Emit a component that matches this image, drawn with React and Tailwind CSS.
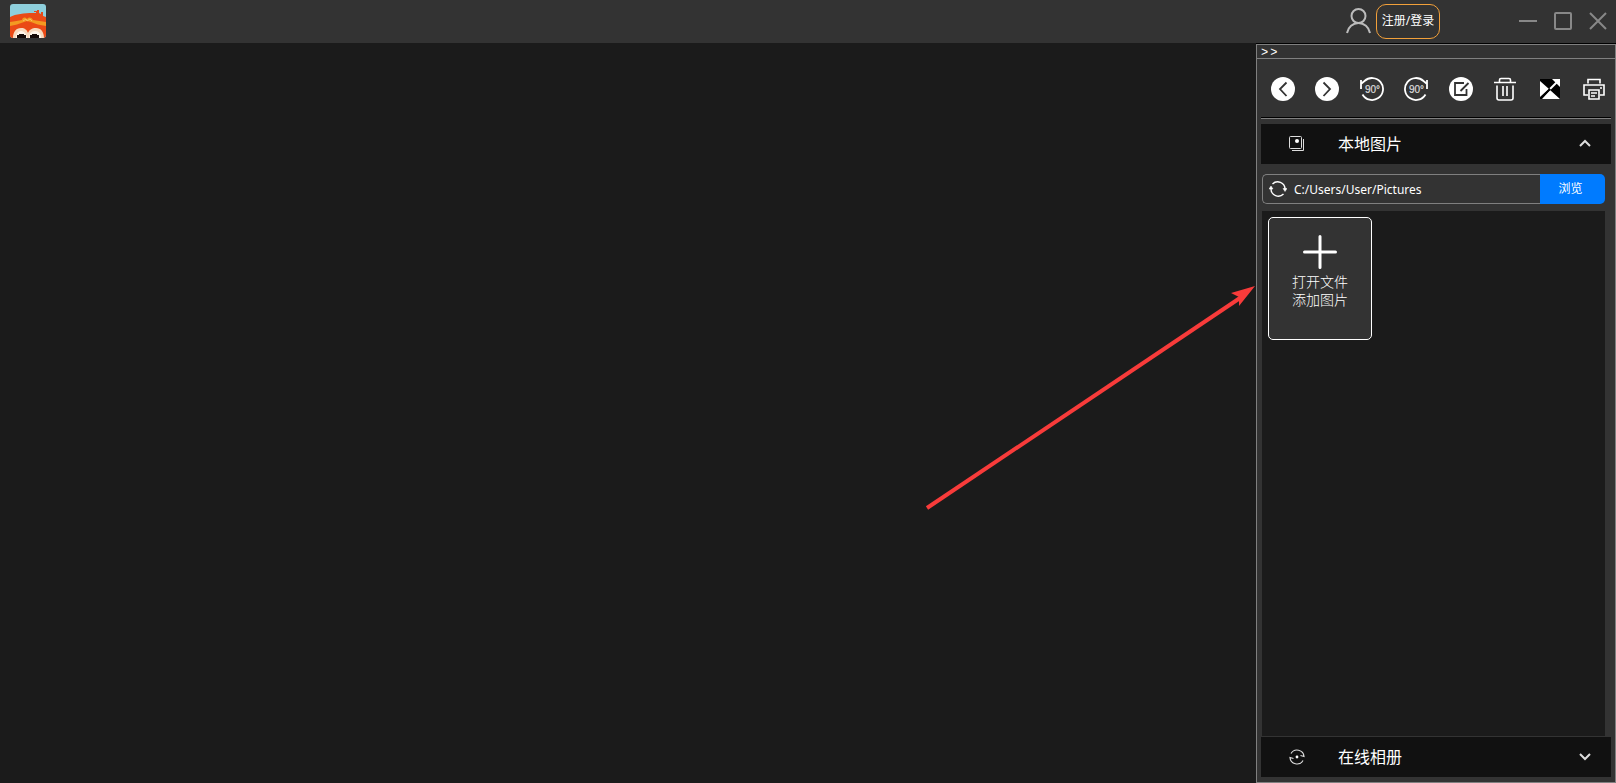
import React from "react";

function Glyph({ children, className = "size-6", viewBox = "0 0 24 24", width = 2 }) {
  return (
    <svg
      className={className}
      viewBox={viewBox}
      fill="none"
      stroke="currentColor"
      strokeWidth={width}
      aria-hidden="true"
    >
      {children}
    </svg>
  );
}

function Logo() {
  return (
    <svg className="h-[34px] w-9" viewBox="0 0 36 34" aria-hidden="true">
      <defs>
        <clipPath id="logo-frame">
          <rect width="36" height="34" rx="3" />
        </clipPath>
      </defs>
      <g clipPath="url(#logo-frame)">
        <rect width="36" height="34" fill="#8ecfdc" />
        <path d="M0 13C6 10 14 9 23 9h3V8h-2V7h3V6h2v3l2 1V8h2v4l3 1v21H0z" fill="#ea4a16" />
        <path d="M0 18c5-1 8-1 12-2 1-3 3-3 5-1 2-2 4-2 6 1 4 1 9 1 13 2v4c-6-1-11-2-15-4l-4-1-3 1c-5 2-9 3-14 4z" fill="#f39a21" />
        <path d="M13 17l3-2 1 2 3-2 2 2" stroke="#f9bd62" fill="none" />
        <path d="M3 34c0-6 3-10 8-10 4 0 6 2 7 5 1-3 4-5 8-5 5 0 8 4 8 10z" fill="#f7d9bd" />
        <path d="M6 34c0-4 2-7 5-7s6 3 6 7zM19 34c0-4 2-7 6-7s6 3 6 7z" fill="#fff6ea" />
        <path d="M7 34v-3h2v-1h5v1h2v3zM20 34v-3h2v-1h5v1h2v3z" fill="#160b08" />
      </g>
    </svg>
  );
}

function Disc({ children }) {
  return (
    <svg className="size-6" viewBox="0 0 24 24" fill="none" aria-hidden="true">
      <circle cx="12" cy="12" r="12" fill="#fff" />
      <g stroke="#333" strokeWidth="1.8">{children}</g>
    </svg>
  );
}

function Rotate({ clockwise }) {
  return (
    <Glyph width={1.8}>
      {clockwise ? (
        <path d="M21.5 17.5A11 11 0 1 1 19.5 4l3 2.5M23 3v9" />
      ) : (
        <path d="M2.5 17.5A11 11 0 1 0 4.5 4L1.5 6.5M1 3v9" />
      )}
      <text
        x="12.5"
        y="15.5"
        textAnchor="middle"
        fill="#ddd"
        stroke="#ddd"
        strokeWidth="0.2"
        fontSize="10"
        fontFamily="Liberation Sans, sans-serif"
      >
        90°
      </text>
    </Glyph>
  );
}

const tools = [
  { label: "上一张", icon: <Disc><path d="M15.5 5.5L9 12l6.5 7" /></Disc> },
  { label: "下一张", icon: <Disc><path d="M8.5 5.5L15 12l-6.5 7" /></Disc> },
  { label: "向左旋转", icon: <Rotate /> },
  { label: "向右旋转", icon: <Rotate clockwise /> },
  { label: "编辑", icon: <Disc><path d="M17.5 12v6H6V6h9M11.5 14l8-8" /></Disc> },
  {
    label: "删除",
    icon: (
      <Glyph width={1.6}>
        <path d="M1 5.5h22M6.5 5V3q0-1.5 1.5-1.5h8q1.5 0 1.5 1.5v2M4 8.5V21q0 2 2 2h12q2 0 2-2V8.5M10 9v10M14 9v10" />
      </Glyph>
    ),
  },
  {
    label: "全屏",
    icon: (
      <Glyph>
        <path d="M2 2h20v20H2z" fill="#000" stroke="none" />
        <path d="M2 4l9 8-9 8zM12 13l10 9H4zM14 2h8v8z" fill="#fff" stroke="none" />
        <path d="M12 12l8-8" stroke="#fff" />
        <path d="M3 21l9-9" stroke="#000" />
      </Glyph>
    ),
  },
  {
    label: "打印",
    icon: (
      <Glyph width={1.6}>
        <path d="M6 6.5V2.5h12v4M6 18H2V8h20v10h-4M7 13h10v9H7zM9 16h6M9 19h4" />
        <path d="M18 11h2" />
      </Glyph>
    ),
  },
];

function Section({ label, icon, chevron, expanded }) {
  return (
    <button
      type="button"
      aria-expanded={expanded}
      className="flex h-10 w-full shrink-0 items-center bg-[#111] pr-5 pl-7 text-base text-white"
    >
      {icon}
      <span className="ml-[33px] flex-1 text-left">{label}</span>
      <Glyph className="size-3 text-[#ddd]" viewBox="0 0 12 12">
        <path d={chevron} />
      </Glyph>
    </button>
  );
}

export default function App() {
  return (
    <div className="relative flex h-screen flex-col bg-[#1b1b1b] font-['Noto_Sans','Noto_Sans_CJK_SC',sans-serif] text-white">
      <header className="flex h-[43px] shrink-0 items-center justify-between bg-[#333] pr-[9px] pb-px pl-2.5">
        <Logo />
        <div className="flex items-center">
          <Glyph className="mr-1 size-[26px] text-[#bbb]" viewBox="0 0 26 26">
            <circle cx="12.5" cy="8" r="7" />
            <path d="M1 25c1-6 6-10 11.500-10s10.500 4 11.500 10" />
          </Glyph>
          <button type="button" className="h-[35px] w-16 rounded-[10px] border border-[#f2a03a] text-xs whitespace-nowrap">
            注册/登录
          </button>
          <div className="ml-[79px] flex gap-[17px] text-[#888]">
            <button type="button" aria-label="最小化">
              <Glyph className="size-[18px]" viewBox="0 0 18 18"><path d="M0 9h18" /></Glyph>
            </button>
            <button type="button" aria-label="最大化">
              <Glyph className="size-[18px]" viewBox="0 0 18 18"><rect x="1" y="1" width="16" height="16" rx="1" /></Glyph>
            </button>
            <button type="button" aria-label="关闭">
              <Glyph className="size-[18px]" viewBox="0 0 18 18"><path d="M1 1l16 16M17 1L1 17" /></Glyph>
            </button>
          </div>
        </div>
      </header>

      <div className="flex min-h-0 flex-1">
        <main className="min-w-0 flex-1" />
        <aside className="flex w-[360px] flex-col border-t border-black">
          <div className="flex min-h-0 flex-1 flex-col border border-[#808080] bg-[#333]">
            <button type="button" className="flex h-3.5 shrink-0 items-center gap-0.5 border-b border-[#808080] px-1 pt-0.5 font-['Liberation_Mono',monospace] text-xs leading-3">
              <span>&gt;</span>
              <span>&gt;</span>
            </button>
            <div className="flex min-h-0 flex-1 flex-col px-1 pb-[5px]">
              <div className="flex h-[58px] shrink-0 items-center justify-between pt-px pr-[5px] pl-2.5">
                {tools.map((t) => (
                  <button key={t.label} type="button" aria-label={t.label}>
                    {t.icon}
                  </button>
                ))}
              </div>
              <div className="mb-[5px] h-0.5 shrink-0 border-t border-b border-t-black border-b-[#808080]" />

              <Section
                label="本地图片"
                expanded
                chevron="M1 8l5-5 5 5"
                icon={
                  <Glyph className="size-4 text-[#ddd]" viewBox="0 0 16 16" width={1}>
                    <rect x="0.5" y="0.5" width="12" height="12" rx="1" />
                    <path d="M14.5 3v11.5H3" />
                    <circle cx="8" cy="5" r="2" fill="#fff" stroke="none" />
                  </Glyph>
                }
              />

              <div className="mt-2.5 mr-[6px] mb-[7px] ml-px flex h-[30px] shrink-0">
                <div className="flex min-w-0 flex-1 items-center rounded-l-[5px] border border-r-0 border-[#808080] pl-1.5">
                  <button type="button" aria-label="刷新">
                    <Glyph className="size-[18px]" viewBox="0 0 18 18" width={1.4}>
                      <path d="M3.5 4A7.3 7.3 0 0 1 16 9M14.5 14A7.3 7.3 0 0 1 2 9" />
                      <path d="M0 9l2-3 2 3zM14 8.5l2 3 2-3z" fill="currentColor" strokeWidth="0.5" />
                    </Glyph>
                  </button>
                  <input
                    aria-label="图片目录"
                    defaultValue="C:/Users/User/Pictures"
                    className="ml-[7px] w-full min-w-0 bg-transparent pt-0.5 text-xs outline-none"
                  />
                </div>
                <button type="button" className="w-[65px] rounded-r-[5px] bg-[#007bff] pr-1 text-xs">
                  浏览
                </button>
              </div>

              <div className="mr-[6px] mb-px ml-px min-h-0 flex-1 bg-[#1b1b1b] p-1.5">
                <button
                  type="button"
                  className="flex h-[123px] w-[104px] flex-col items-center rounded-[5px] border border-white bg-[#333] pt-[17px] text-sm leading-[18px] font-light"
                >
                  <Glyph className="mb-1 size-[34px]" viewBox="0 0 34 34" width={3}>
                    <path d="M17 1.5v31M1.5 17h31" strokeLinecap="round" />
                  </Glyph>
                  <span>打开文件</span>
                  <span>添加图片</span>
                </button>
              </div>

              <Section
                label="在线相册"
                expanded={false}
                chevron="M1 3l5 5 5-5"
                icon={
                  <Glyph className="size-4 text-[#ddd]" viewBox="0 0 16 16" width={1.2}>
                    <path d="M2 4.500A7 7 0 0 1 15 7.500l-3.500-1M14 11.500A7 7 0 0 1 1 8.500l3.500 1" />
                    <circle cx="8" cy="8" r="1.4" fill="#fff" stroke="none" />
                  </Glyph>
                }
              />
            </div>
          </div>
        </aside>
      </div>

      <svg className="pointer-events-none absolute top-[285px] right-[361px] h-[225px] w-[330px]" viewBox="0 0 330 225" aria-hidden="true">
        <path d="M2 223L315 13" stroke="#f83b3a" strokeWidth="4" />
        <path d="M330 1L306 8l8 4v9z" fill="#f83b3a" />
      </svg>
    </div>
  );
}
